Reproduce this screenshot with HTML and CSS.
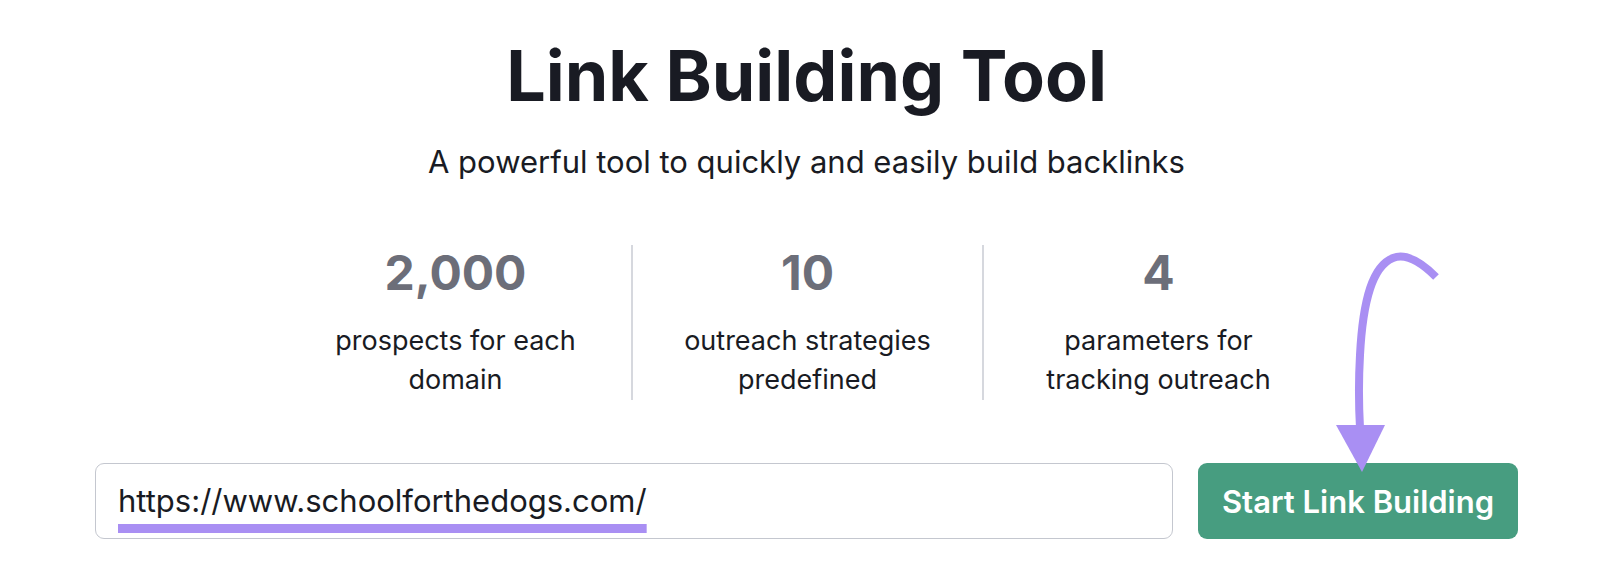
FILE: index.html
```html
<!DOCTYPE html>
<html lang="en">
<head>
<meta charset="utf-8">
<title>Link Building Tool</title>
<link rel="stylesheet" href="styles.css">
</head>
<body>
<main class="page">
  <h1 class="title">Link Building Tool</h1>
  <p class="subtitle">A powerful tool to quickly and easily build backlinks</p>
  <section class="stats">
    <div class="stat">
      <div class="stat-num">2,000</div>
      <div class="stat-label">prospects for each<br>domain</div>
    </div>
    <div class="stat">
      <div class="stat-num">10</div>
      <div class="stat-label">outreach strategies<br>predefined</div>
    </div>
    <div class="stat">
      <div class="stat-num">4</div>
      <div class="stat-label">parameters for<br>tracking outreach</div>
    </div>
  </section>
  <form class="search">
    <div class="url-field"><span class="url-text">https://www.schoolforthedogs.com/</span></div>
    <button type="button" class="start-btn">Start Link Building</button>
  </form>
</main>
<svg class="arrow" width="1600" height="565" viewBox="0 0 1600 565" aria-hidden="true">
  <path d="M1436 277 C1420 261 1406 253 1393 258 C1373 266 1363 298 1360 355 C1358 390 1359 410 1360 428" fill="none" stroke="#a98ff3" stroke-width="8"/>
  <path d="M1336 425 L1385 425 L1362 472 Z" fill="#a98ff3"/>
</svg>
</body>
</html>
```

FILE: styles.css
```css
* { box-sizing: border-box; }
html, body { margin: 0; padding: 0; background: #ffffff; }
body {
  width: 1600px;
  height: 565px;
  overflow: hidden;
  font-family: Inter, "Noto Sans", "Liberation Sans", sans-serif;
  color: #191b23;
}
.page {
  width: 1423px;
  margin-left: 95px;
  padding-top: 32px;
  display: flex;
  flex-direction: column;
  align-items: center;
}
.title {
  margin: 0;
  font-size: 70px;
  line-height: 88px;
  font-weight: 700;
  color: #191b23;
}
.subtitle {
  margin: 23px 0 0;
  font-size: 31px;
  line-height: 38px;
  font-weight: 400;
  color: #191b23;
}
.stats {
  margin-top: 64px;
  display: flex;
}
.stat {
  width: 351px;
  height: 155px;
  text-align: center;
}
.stat + .stat { border-left: 2px solid #d6d8de; }
.stat-num {
  font-size: 48px;
  line-height: 56px;
  font-weight: 700;
  color: #6c6e79;
}
.stat-label {
  margin-top: 20px;
  font-size: 27px;
  line-height: 39px;
  color: #191b23;
}
.search {
  margin: 63px 0 0;
  width: 100%;
  display: flex;
  gap: 25px;
}
.url-field {
  flex: 1;
  height: 76px;
  border: 1px solid #c4c7cf;
  border-radius: 9px;
  padding: 0 22px;
  display: flex;
  align-items: center;
}
.url-text {
  font-size: 31px;
  line-height: 36px;
  color: #191b23;
  text-decoration: underline;
  text-decoration-color: #a98ff3;
  text-decoration-thickness: 9px;
  text-underline-offset: 12px;
  text-decoration-skip-ink: none;
}
.start-btn {
  width: 320px;
  height: 76px;
  border: none;
  border-radius: 9px;
  background: #479d80;
  color: #ffffff;
  font-family: inherit;
  font-size: 31px;
  font-weight: 600;
  padding: 0;
}
.arrow {
  position: absolute;
  left: 0;
  top: 0;
  pointer-events: none;
}
```
